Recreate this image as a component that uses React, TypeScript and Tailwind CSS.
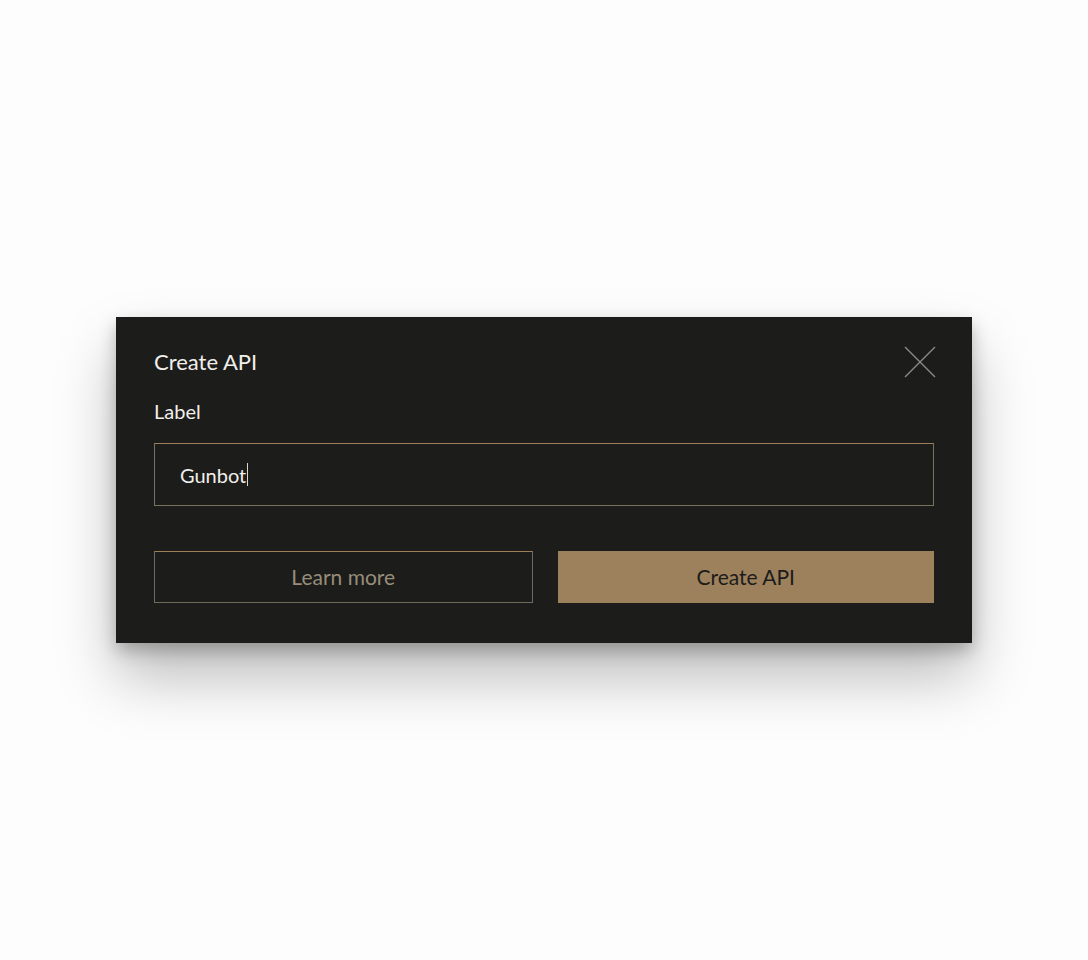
const font = { fontFamily: 'Lato, "Noto Sans", sans-serif' };

function CloseIcon() {
  return (
    <svg width="32" height="32" viewBox="0 0 32 32" fill="none" aria-hidden="true">
      <path d="M1 1L31 31M31 1L1 31" stroke="#8c8a84" strokeWidth="1.4" />
    </svg>
  );
}

export default function App() {
  const label = 'Gunbot';

  return (
    <div className="flex min-h-[960px] w-full items-center justify-center bg-[#fdfdfd]" style={font}>
      <div className="w-[856px] bg-[#1c1c1b] px-[38px] pb-[40px] pt-[30px] shadow-[0_34px_56px_rgba(0,0,0,0.26),0_8px_16px_rgba(0,0,0,0.24)]">
        <div className="flex items-start justify-between">
          <h2 className="text-[22px] leading-[30px] text-[#f1efea]">Create API</h2>
          <button type="button" className="mr-[-2px] mt-[-1px]" aria-label="Close">
            <CloseIcon />
          </button>
        </div>

        <label className="mt-[20px] block text-[20px] leading-[26px] text-[#f1efea]">Label</label>

        <div className="mt-[19px] flex h-[63px] items-center border border-[#77725f] border-t-[#9d7f57] px-[25px]">
          <span className="text-[20px] text-[#f1efea]">{label}</span>
          <span className="ml-[1px] h-[23px] w-[1px] bg-[#d8d6d0]" />
        </div>

        <div className="mt-[45px] flex gap-[25px]">
          <button
            type="button"
            className="h-[52px] flex-1 border border-[#6f6a5c] border-t-[#9d7f57] text-[21px] text-[#978d78]"
          >
            Learn more
          </button>
          <button type="button" className="h-[52px] flex-1 bg-[#9c815c] text-[21px] text-[#1c1c1b]">
            Create API
          </button>
        </div>
      </div>
    </div>
  );
}
